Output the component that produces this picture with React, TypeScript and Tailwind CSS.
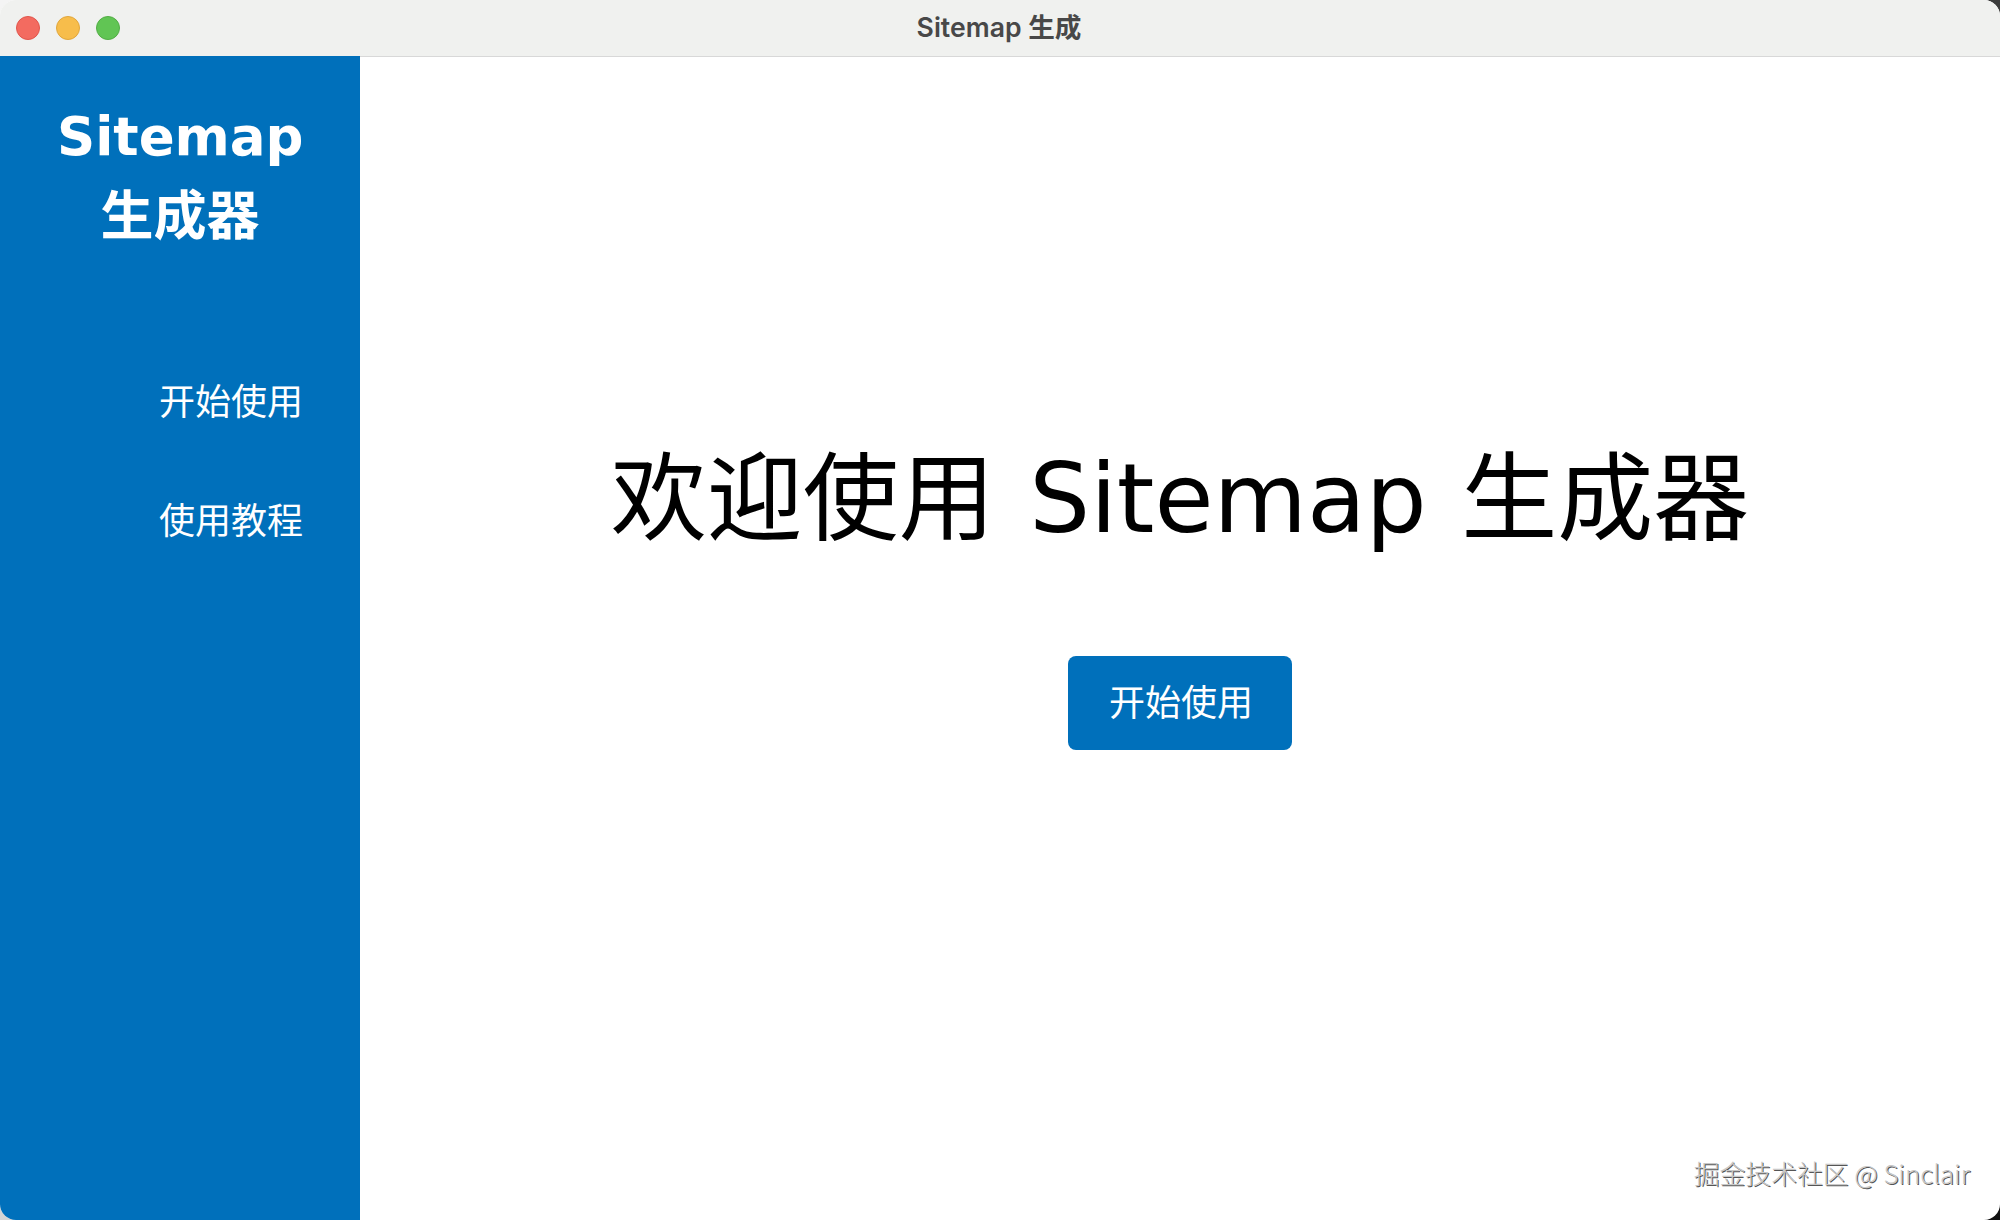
import React from 'react';

const cjk = "font-['DejaVu_Sans','Noto_Sans_CJK_SC',sans-serif]";

const App: React.FC = () => {
  return (
    <div className="h-[1220px] w-[2000px] bg-[conic-gradient(#3c3c3c_0_25%,#111111_0_50%,#d5d5d5_0_75%,#f4f4f4_0)]">
      <div className={`relative flex h-full flex-col overflow-hidden rounded-[16px] bg-white ${cjk}`}>
        <header className="relative flex h-[57px] shrink-0 items-center justify-center border-b border-[#d8d8d8] bg-[#f0f1ef] pr-[2px]">
          <div className="absolute left-[16px] flex gap-[16px]">
            <span className="h-[24px] w-[24px] rounded-full border border-[#e0564c] bg-[#f36b60]" />
            <span className="h-[24px] w-[24px] rounded-full border border-[#e0a63c] bg-[#f7bd4b]" />
            <span className="h-[24px] w-[24px] rounded-full border border-[#52ad45] bg-[#61c554]" />
          </div>
          <span className="font-['Inter','Noto_Sans_CJK_SC',sans-serif] text-[26.6px] font-semibold text-[#484848]">Sitemap 生成</span>
        </header>

        <div className="flex min-h-0 flex-1">
          <aside className="relative -mt-px flex w-[360px] shrink-0 flex-col bg-[#0070bb] pr-[57px] text-white">
            <h1 className="mt-[41px] pl-[57px] text-center text-[53px] leading-[80px] font-bold">Sitemap 生成器</h1>
            <nav className="mt-[122px] flex flex-col items-end gap-[72px] text-[36px] leading-[47px]">
              <a href="#">开始使用</a>
              <a href="#">使用教程</a>
            </nav>
          </aside>

          <main className="flex flex-1 flex-col items-center pt-[386px]">
            <h2 className="text-[96px] leading-[112px] font-normal [word-spacing:4px] text-black">欢迎使用 Sitemap 生成器</h2>
            <button className="mt-[101px] h-[94px] w-[224px] rounded-[8px] bg-[#0070bb] pt-[2px] pl-[2px] text-[36px] text-white">开始使用</button>
          </main>
        </div>

        <span className="absolute right-[30px] bottom-[29px] font-['Noto_Sans_CJK_SC','Noto_Sans',sans-serif] text-[25.8px] leading-[36px] font-light text-[#c8c8c8] [text-shadow:1px_1px_0_#555555]">掘金技术社区 @ Sinclair</span>
      </div>
    </div>
  );
};

export default App;
